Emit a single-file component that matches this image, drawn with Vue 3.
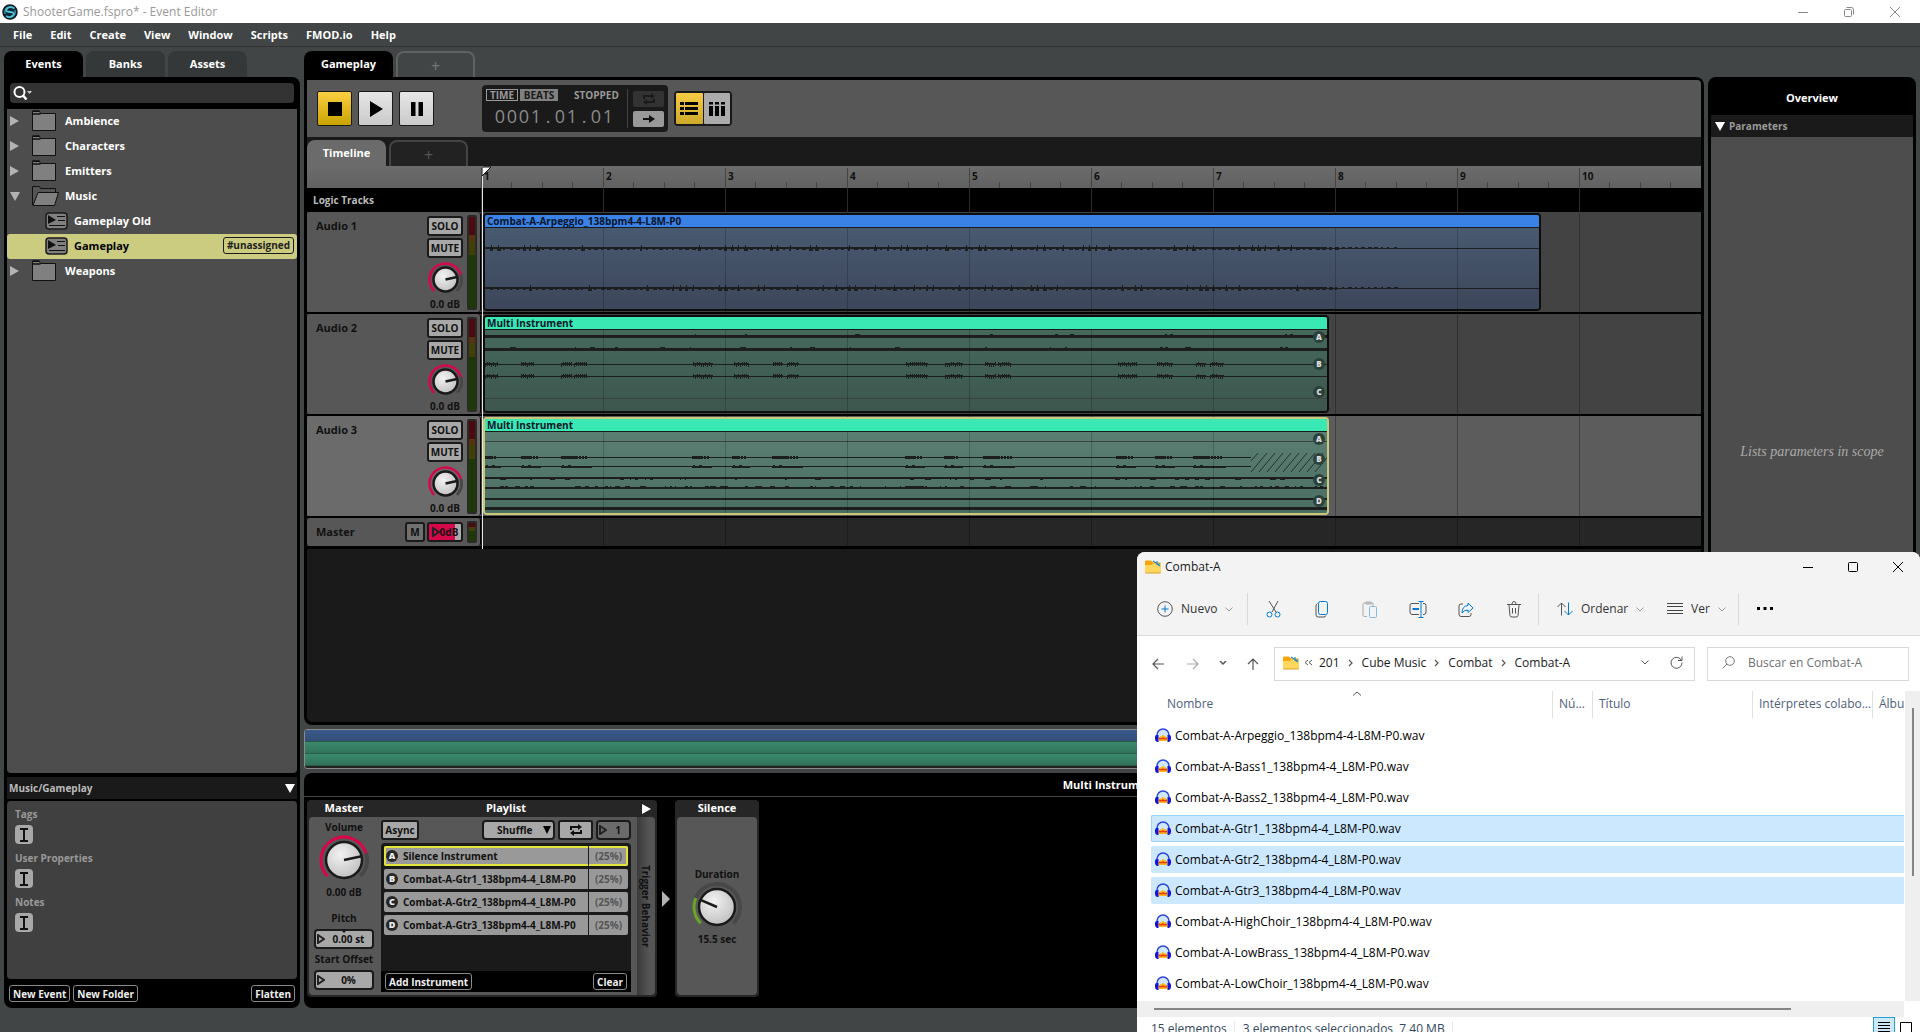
<script setup>
import { h } from 'vue'

const menus = ['File', 'Edit', 'Create', 'View', 'Window', 'Scripts', 'FMOD.io', 'Help']
const tree = [
  { name: 'Ambience', kind: 'folder' },
  { name: 'Characters', kind: 'folder' },
  { name: 'Emitters', kind: 'folder' },
  { name: 'Music', kind: 'open' },
  { name: 'Gameplay Old', kind: 'event' },
  { name: 'Gameplay', kind: 'event', selected: true, tag: '#unassigned' },
  { name: 'Weapons', kind: 'folder' },
]
const properties = ['Tags', 'User Properties', 'Notes']
const bars = [1, 2, 3, 4, 5, 6, 7, 8, 9, 10]
const position = '0001.01.01'.split('')
const playlist = [
  { id: 'A', name: 'Silence Instrument', selected: true },
  { id: 'B', name: 'Combat-A-Gtr1_138bpm4-4_L8M-P0' },
  { id: 'C', name: 'Combat-A-Gtr2_138bpm4-4_L8M-P0' },
  { id: 'D', name: 'Combat-A-Gtr3_138bpm4-4_L8M-P0' },
]
const files = [
  'Combat-A-Arpeggio_138bpm4-4-L8M-P0.wav',
  'Combat-A-Bass1_138bpm4-4_L8M-P0.wav',
  'Combat-A-Bass2_138bpm4-4_L8M-P0.wav',
  'Combat-A-Gtr1_138bpm4-4_L8M-P0.wav',
  'Combat-A-Gtr2_138bpm4-4_L8M-P0.wav',
  'Combat-A-Gtr3_138bpm4-4_L8M-P0.wav',
  'Combat-A-HighChoir_138bpm4-4_L8M-P0.wav',
  'Combat-A-LowBrass_138bpm4-4_L8M-P0.wav',
  'Combat-A-LowChoir_138bpm4-4_L8M-P0.wav',
]
const crumbs = ['201', 'Cube Music', 'Combat', 'Combat-A']

/* Waveforms are built from small rectangles with a repeatable noise source. */
function noise(n) {
  const v = Math.sin(n * 12.9898 + 4.1) * 43758.5453
  return v - Math.floor(v)
}
const rect = (x, y, w, t) => `M${x} ${y}h${w}v${t}h${-w}z`

function pulses(y, seed) {
  let d = rect(0, y, 1060, 1) + rect(0, y - 1, 842, 2)
  let i = 0
  for (let x = 5; x < 915; x += 6 + (i % 2)) {
    i++
    const late = x > 850
    const up = late ? 1 : 1 + Math.floor(noise(i + seed) * 3)
    const w = 2 + Math.floor(noise(i * 3 + seed) * 3)
    d += rect(x, y - 1, w, late ? 2 : 3 + (up > 2 ? 1 : 0))
    if (!late && up > 2) d += rect(x + 1, y - 3, 1, 6)
  }
  return d
}
function band(y, t, seed, density, side) {
  let d = rect(0, y, 846, t)
  for (let x = 0; x < 840; x += 5) {
    if (noise(x + seed) < density) d += rect(x, side < 0 ? y - 1 : y + t, 1 + Math.floor(noise(x + seed * 2) * 6), 1)
  }
  return d
}
const burstsTwo = [[0, 13], [36, 49], [76, 87], [89, 102], [208, 228], [249, 264], [288, 298], [302, 314], [421, 443], [460, 478], [500, 511], [513, 526], [633, 652], [672, 688], [711, 721], [725, 739]]
const burstsThree = [[0, 12], [36, 52], [76, 103], [207, 223], [247, 261], [287, 314], [420, 436], [459, 474], [498, 526], [631, 647], [670, 686], [708, 737]]
function combs(y) {
  let d = rect(0, y, 846, 1)
  for (const [a, b] of burstsTwo) {
    d += rect(a, y - 1, b - a, 2)
    for (let x = a; x < b; x += 2) d += rect(x, y - (noise(x) > 0.4 ? 2 : 1), 1, 4)
  }
  return d
}
function blocks(y, tall) {
  let d = rect(0, y, 766, 1)
  for (const [a, b] of burstsThree) {
    if (tall) {
      d += rect(a, y - 1, Math.round((b - a) * 0.6), 3)
      for (let x = a; x < b; x += 3) d += rect(x, y - 1, 2, 3)
    } else {
      d += rect(a, y, b - a + 4, 2)
      d += rect(a + 1, y - 1, 2, 1) + rect(a + 7, y - 1, 3, 1)
    }
  }
  return d
}
let hatch = 'M766 29l7 -8'
for (let i = 0; i < 9; i++) hatch += `M${766 + i * 8} 40l16 -19`

const tracks = [
  { name: 'Audio 1', clip: 'Combat-A-Arpeggio_138bpm4-4-L8M-P0', tone: 'blue', width: 1058, wave: pulses(20, 1) + pulses(60, 9), faint: [], voices: [] },
  {
    name: 'Audio 2', clip: 'Multi Instrument', tone: 'green', width: 846,
    wave: band(5, 3, 3, 0.06, -1) + band(18, 3, 8, 0.15, -1) + combs(34) + combs(46),
    faint: [68], voices: [['A', 1], ['B', 28], ['C', 56]],
  },
  {
    name: 'Audio 3', clip: 'Multi Instrument', tone: 'green', width: 846, selected: true, hatch: true,
    wave: blocks(25, true) + blocks(34, false) + band(45, 2, 5, 0.15, 1) + band(55, 2, 2, 0.5, -1) + rect(0, 66, 846, 2) + rect(0, 75, 846, 3),
    faint: [9], voices: [['A', 1], ['B', 21], ['C', 42], ['D', 63]],
  },
]

/* Rotary control: arc from 135° clockwise to 405°. */
function Knob({ size, value, color, track = '#484848' }) {
  const big = size > 40
  const c = size / 2
  const r = big ? 23 : 16
  const pt = (deg, rad) => {
    const a = (deg * Math.PI) / 180
    return `${(c + rad * Math.cos(a)).toFixed(2)} ${(c + rad * Math.sin(a)).toFixed(2)}`
  }
  const arc = (a, b, stroke, w) => h('path', { d: `M${pt(a, r)}A${r} ${r} 0 ${b - a > 180 ? 1 : 0} 1 ${pt(b, r)}`, stroke, 'stroke-width': w, fill: 'none' })
  return h('svg', { width: size, height: size, 'aria-hidden': 'true' }, [
    h('defs', [h('radialGradient', { id: 'cap', cx: '40%', cy: '35%', r: '70%' }, [h('stop', { offset: '0', 'stop-color': '#f2f2f2' }), h('stop', { offset: '1', 'stop-color': '#bfbfbf' })])]),
    arc(value, 405, track, big ? 4 : 3),
    arc(135, value, color, big ? 3 : 2.5),
    h('circle', { cx: c, cy: c, r: big ? 18 : 12, fill: 'url(#cap)', stroke: '#1a1a1a', 'stroke-width': 2.5 }),
    h('path', { d: `M${c} ${c}L${pt(value > 300 ? 348 : value, big ? 18 : 13)}`, stroke: '#1a1a1a', 'stroke-width': 2.5 }),
  ])
}
Knob.props = ['size', 'value', 'color', 'track']

const Chevron = () => h('svg', { width: 8, height: 5, fill: 'none', stroke: 'currentColor', 'aria-hidden': 'true' }, [h('path', { d: 'M.5 .5L4 4 7.500 .5' })])
const Loop = () => h('svg', { width: 14, height: 12, viewBox: '0 0 14 12', fill: 'none', stroke: 'currentColor', 'stroke-width': 2, 'aria-hidden': 'true' }, [
  h('path', { d: 'M2 6V3h8M12 6v3H4' }),
  h('path', { d: 'M9 0l4 3-4 3zM5 6L1 9l4 3z', fill: 'currentColor', stroke: 'none' }),
])
const FolderIcon = () => h('svg', { width: 16, height: 14, viewBox: '0 0 16 14', 'aria-hidden': 'true' }, [
  h('path', { d: 'M0 1.500Q0 .5 1 .5h5l2 2h7q1 0 1 1V8H0z', fill: '#f5a50a' }),
  h('path', { d: 'M0 5h7l1.500-1.500H16v8.500q0 1-1 1H1q-1 0-1-1z', fill: '#ffd75e' }),
  h('path', { d: 'M0 12q0 1.500 1 1.500h14q1 0 1-1.500v.5H0z', fill: '#e0a020' }),
  h('path', { d: 'M8 1l3 2M15 6l-3-2M12 1v3M11 4h4', stroke: '#1e88c7', 'stroke-width': 1.2, fill: 'none' }),
])
const Audacity = () => h('svg', { width: 16, height: 15, viewBox: '0 0 16 15', 'aria-hidden': 'true' }, [
  h('circle', { cx: 8, cy: 7.5, r: 5.5, fill: '#cfe8fb' }),
  h('path', { d: 'M3.500 13V10l2-2 1 .5L8 6.500l1.500 2 1-.5 2 2v3z', fill: '#ffb31a' }),
  h('path', { d: 'M4 9.500l2 .8 2-1 2 1 2-.8v1.500l-2 .6-2-.6-2 .6-2-.6z', fill: '#f0330a' }),
  h('path', { d: 'M2 9V7a6 6 0 0112 0v2', stroke: '#2a44e0', 'stroke-width': 1.5, fill: 'none' }),
  h('path', { d: 'M0 9q0-2 2-2h1.500v7H2Q0 13 0 11zM16 9q0-2-2-2h-1.500v7H14q2-1 2-3z', fill: '#1414d8' }),
])
</script>

<template>
  <div class="desktop">
    <header class="titlebar">
      <svg width="16" height="16" viewBox="0 0 16 16" aria-hidden="true">
        <circle cx="8" cy="8" r="7" fill="#0f2a33" stroke="#12181b" stroke-width="1.500" />
        <path d="M12.500 4.500Q8 1.500 5 4.500T8 8t3 3.500-7 .5" fill="none" stroke="#4fc3dc" stroke-width="1.800" />
        <path d="M3 10q-1-5 3-7M13 6q1 5-3 7" fill="none" stroke="#4fc3dc" />
      </svg>
      <h1>ShooterGame.fspro* - Event Editor</h1>
      <div class="caption">
        <button aria-label="Minimize"><svg width="10" height="10"><path d="M0 5.500h10" stroke="currentColor" /></svg></button>
        <button aria-label="Restore"><svg width="10" height="10" fill="none" stroke="currentColor"><rect x=".5" y="2.500" width="7" height="7" rx="1" /><path d="M2.500.5h5q2 0 2 2v5" /></svg></button>
        <button aria-label="Close"><svg width="10" height="10"><path d="M0 0l10 10M10 0L0 10" stroke="currentColor" /></svg></button>
      </div>
    </header>
    <nav class="menubar"><button v-for="m in menus" :key="m">{{ m }}</button></nav>

    <main class="workspace">
      <aside class="browser">
        <div class="tabs">
          <button class="tab on">Events</button><button class="tab">Banks</button><button class="tab">Assets</button>
        </div>
        <div class="browser-panel">
          <label class="search">
            <svg width="20" height="15" viewBox="0 0 20 15" aria-hidden="true"><circle cx="6.500" cy="6" r="5" fill="none" stroke="#fff" stroke-width="2" /><path d="M10 9.500l3.500 4" stroke="#fff" stroke-width="2.500" /><path d="M14 5h5l-2.500 3z" fill="#ccc" /></svg>
            <input type="text" aria-label="Search events" />
          </label>
          <ul class="tree">
            <li v-for="t in tree" :key="t.name" :class="[t.kind, { selected: t.selected }]">
              <svg v-if="t.kind !== 'event'" class="arrow" width="10" height="10" aria-hidden="true"><path :d="t.kind === 'open' ? 'M0 1h10L5 10z' : 'M0 0l9 5-9 5z'" fill="#b3b3b3" /></svg>
              <svg v-if="t.kind === 'folder'" class="glyph" width="28" height="22" aria-hidden="true"><path d="M.5 20.500v-19h7l1 2h15v17z" fill="#808080" stroke="#111" /><path d="M.5 4h8M.5 1h7" stroke="#111" stroke-width="1.500" /></svg>
              <svg v-else-if="t.kind === 'open'" class="glyph" width="28" height="22" aria-hidden="true"><path d="M.5 20V1.500h7l1 2h15V7" fill="#555" stroke="#111" /><path d="M1 20.500L6 7.500h20.500l-4 13z" fill="#808080" stroke="#111" /></svg>
              <svg v-else class="glyph" width="23" height="18" aria-hidden="true"><rect x="1" y="1" width="21" height="16" rx="3" fill="#808080" stroke="#1a1a1a" stroke-width="1.500" /><path d="M3 3l8 5-8 4z" fill="#111" /><path d="M12 4.500h8M13 8.500h7M4 13.500h16" stroke="#111" /></svg>
              <span>{{ t.name }}</span>
              <em v-if="t.tag">{{ t.tag }}</em>
            </li>
          </ul>
          <div class="section-bar"><span>Music/Gameplay</span><svg width="10" height="9" aria-hidden="true"><path d="M0 0h10L5 9z" fill="#fff" /></svg></div>
          <div class="properties">
            <template v-for="p in properties" :key="p">
              <h3>{{ p }}</h3>
              <button :aria-label="'Edit ' + p"><svg width="8" height="14" fill="none" stroke="#111" stroke-width="2"><path d="M0 1h8M0 13h8M4 1v12" /></svg></button>
            </template>
          </div>
          <div class="browser-foot"><button class="outline">New Event</button><button class="outline">New Folder</button><button class="outline last">Flatten</button></div>
        </div>
      </aside>

      <section class="right">
        <div class="upper">
          <div class="editor">
            <div class="tabs"><button class="tab on wide">Gameplay</button><button class="tab add" aria-label="New tab">+</button></div>
            <div class="editor-panel">
              <div class="transport">
                <button class="key gold" aria-label="Stop"><svg width="14" height="14"><path d="M0 0h14v14H0z" /></svg></button>
                <button class="key" aria-label="Play"><svg width="14" height="16"><path d="M1 0l13 8-13 8z" /></svg></button>
                <button class="key" aria-label="Pause"><svg width="12" height="14"><path d="M0 0h4.500v14H0zM7.500 0H12v14H7.500z" /></svg></button>
                <div class="counter">
                  <div class="readout">
                    <div class="modes"><button>TIME</button><button class="lit">BEATS</button><span>STOPPED</span></div>
                    <div class="digits"><i v-for="(c, i) in position" :key="i">{{ c }}</i></div>
                  </div>
                  <div class="loops"><button aria-label="Loop"><Loop /></button><button class="lit" aria-label="Follow"><svg width="12" height="8"><path d="M0 4h8" stroke="#111" stroke-width="2" /><path d="M6 0l6 4-6 4z" fill="#111" /></svg></button></div>
                </div>
                <div class="views">
                  <button class="gold" aria-label="Track view"><svg width="18" height="14"><path d="M0 0h4v3H0zM5 0h13v3H5zM0 5h4v3H0zM5 5h13v3H5zM0 10h4v3H0zM5 10h13v3H5z" /></svg></button>
                  <button aria-label="Mixer view"><svg width="16" height="14"><path d="M0 0h4v2.500H0zM0 4h4v10H0zM6 0h4v2.500H6zM6 4h4v10H6zM12 0h4v2.500h-4zM12 4h4v10h-4z" /></svg></button>
                </div>
              </div>
              <div class="sheets"><button class="tab on">Timeline</button><button class="tab add" aria-label="New parameter sheet">+</button></div>
              <div class="timeline">
                <div class="ruler"><div class="bars"><span v-for="b in bars" :key="b">{{ b }}</span></div></div>
                <div class="logic"><h2>Logic Tracks</h2><div class="grid"></div></div>
                <div v-for="t in tracks" :key="t.name" class="track" :class="{ selected: t.selected }">
                  <div class="head">
                    <h2>{{ t.name }}</h2>
                    <div class="controls"><button>SOLO</button><button>MUTE</button><Knob :size="35" :value="343" color="#d6084a" /><small>0.0 dB</small></div>
                    <div class="meter"></div>
                  </div>
                  <div class="lane grid">
                    <div class="clip" :class="t.tone" :style="{ width: t.width + 'px' }">
                      <div class="clip-title">{{ t.clip }}</div>
                      <div class="wave">
                        <svg :width="t.width - 4" height="81" aria-hidden="true">
                          <path v-for="f in t.faint" :key="f" :d="`M0 ${f + 0.5}h846`" stroke="#3d4342" />
                          <path :d="t.wave" fill="#1c1f1e" shape-rendering="crispEdges" />
                          <path v-if="t.hatch" :d="hatch" stroke="#27302d" fill="none" />
                        </svg>
                        <b v-for="v in t.voices" :key="v[0]" :style="{ top: v[1] + 'px' }">{{ v[0] }}</b>
                      </div>
                    </div>
                  </div>
                </div>
                <div class="track master">
                  <div class="head">
                    <h2>Master</h2>
                    <button class="mute">M</button>
                    <button class="fader"><svg width="8" height="10" fill="none" stroke="#222" stroke-width="2"><path d="M1 1l6 4-6 4z" /></svg>0dB</button>
                    <div class="meter"></div>
                  </div>
                  <div class="lane grid"></div>
                </div>
                <div class="playhead"><svg width="10" height="10"><path d="M0 1h9L0 10z" fill="#fff" stroke="#111" /></svg></div>
              </div>
            </div>
            <div class="strip"><i></i><i></i><i></i></div>
          </div>
          <aside class="overview">
            <h2>Overview</h2>
            <h3><svg width="10" height="9" aria-hidden="true"><path d="M0 0h10L5 9z" fill="#fff" /></svg>Parameters</h3>
            <p>Lists parameters in scope</p>
          </aside>
        </div>

        <div class="deck">
          <h2>Multi Instrument</h2>
          <div class="modules">
            <section class="module">
              <div class="master-col">
                <h3>Master</h3>
                <div class="plate">
                  <label>Volume</label><Knob :size="50" :value="343" color="#d6084a" /><span class="amount">0.00 dB</span>
                  <label for="pitch">Pitch</label>
                  <div class="field notch"><svg width="8" height="10" fill="none" stroke="#222" stroke-width="2"><path d="M1 1l6 4-6 4z" /></svg><input id="pitch" value="0.00 st" /></div>
                  <label for="offset">Start Offset</label>
                  <div class="field"><svg width="8" height="10" fill="none" stroke="#222" stroke-width="2"><path d="M1 1l6 4-6 4z" /></svg><input id="offset" value="0%" /></div>
                </div>
              </div>
              <div class="list-col">
                <h3>Playlist</h3>
                <div class="plate">
                  <div class="tools">
                    <button>Async</button>
                    <div class="select"><select aria-label="Play mode"><option>Shuffle</option></select><svg width="8" height="8" aria-hidden="true"><path d="M0 0h8L4 8z" /></svg></div>
                    <button class="loop" aria-label="Loop"><Loop /></button>
                    <div class="count"><svg width="8" height="10" fill="none" stroke="#222" stroke-width="2"><path d="M1 1l6 4-6 4z" /></svg><input value="1" aria-label="Play count" /></div>
                  </div>
                  <ul>
                    <li v-for="p in playlist" :key="p.id" :class="{ selected: p.selected }"><b>{{ p.id }}</b><span>{{ p.name }}</span><small>(25%)</small></li>
                  </ul>
                  <div class="list-foot"><button class="outline">Add Instrument</button><button class="outline">Clear</button></div>
                </div>
              </div>
              <div class="trigger">
                <h3><svg width="9" height="10" aria-label="Expand"><path d="M0 0l9 5-9 5z" fill="#fff" /></svg></h3>
                <div class="plate"><span>Trigger Behavior</span></div>
              </div>
            </section>
            <svg class="chain" width="8" height="16" aria-hidden="true"><path d="M0 0l8 8-8 8z" fill="#b3b3b3" /></svg>
            <section class="module silence">
              <div class="silence-col">
                <h3>Silence</h3>
                <div class="plate"><label>Duration</label><Knob :size="50" :value="203" color="#6ba527" /><span class="amount">15.5 sec</span></div>
              </div>
            </section>
          </div>
        </div>
      </section>
    </main>

    <section class="explorer">
      <div class="ex-top">
        <div class="ex-title"><FolderIcon /><h2>Combat-A</h2>
          <div class="caption">
            <button aria-label="Minimizar"><svg width="10" height="10"><path d="M0 5.500h10" stroke="currentColor" /></svg></button>
            <button aria-label="Maximizar"><svg width="10" height="10"><rect x=".5" y=".5" width="9" height="9" rx="1" fill="none" stroke="currentColor" /></svg></button>
            <button aria-label="Cerrar"><svg width="10" height="10"><path d="M0 0l10 10M10 0L0 10" stroke="currentColor" /></svg></button>
          </div>
        </div>
        <div class="ex-tools">
          <button class="new"><svg width="16" height="16" fill="none"><circle cx="8" cy="8" r="7.300" stroke="#555" /><path d="M8 4.500v7M4.500 8h7" stroke="#0078d4" /></svg>Nuevo<Chevron /></button>
          <hr />
          <button class="ico" aria-label="Cortar"><svg width="16" height="17" fill="none"><path d="M3 0l7 11M12 0L6 11" stroke="#555" /><circle cx="3.500" cy="13.500" r="2.500" stroke="#0078d4" /><circle cx="11.500" cy="13.500" r="2.500" stroke="#0078d4" /></svg></button>
          <button class="ico" aria-label="Copiar"><svg width="14" height="17" fill="none"><path d="M2.500 2.500Q1 3 1 5v9q0 2 2 2h6q1.500 0 2-1.500" stroke="#555" /><rect x="3.500" y=".5" width="9" height="13" rx="2" stroke="#0078d4" /></svg></button>
          <button class="ico dim" aria-label="Pegar"><svg width="16" height="17" fill="none"><path d="M5 15.500H2.500q-1.500 0-1.500-1.500V3q0-1 1.500-1H11v3" stroke="#555" /><path d="M4 1h5v2H4z" stroke="#555" /><rect x="7.500" y="5.500" width="7" height="11" rx="1" stroke="#0078d4" /></svg></button>
          <button class="ico" aria-label="Cambiar nombre"><svg width="18" height="17" fill="none"><path d="M10 2.500H3Q1 2.500 1 4v7q0 2.500 2 2.500h7M14 2.500h1q2 0 2 2V11q0 2.500-2 2.500h-1" stroke="#555" /><path d="M12 .5v16M9.500.5h5M9.500 16.500h5" stroke="#0078d4" /><path d="M3.500 8H10" stroke="#0078d4" stroke-width="2" /></svg></button>
          <button class="ico" aria-label="Compartir"><svg width="16" height="17" fill="none"><path d="M5 3H3Q1 3 1 5v8q0 2.500 2 2.500h8q2 0 2-2V12" stroke="#555" /><path d="M10 2l5 5-5 4.500V9q-4 0-6 3 0-7 6-7.500z" stroke="#0078d4" /></svg></button>
          <button class="ico" aria-label="Eliminar"><svg width="14" height="17" fill="none" stroke="#555"><path d="M0 3.500h14M5 3q0-2.500 2-2.500T9 3M2 4l1 10.500q0 1.500 2 1.500h4q2 0 2-1.500L12 4M5.500 7v5.500M8.500 7v5.500" /></svg></button>
          <hr />
          <button class="sort"><svg width="16" height="14" fill="none"><path d="M4.500 13.500V1M.5 5l4-4 4 4" stroke="#555" /><path d="M11.500.5V13M7.500 9l4 4 4-4" stroke="#0078d4" /></svg>Ordenar<Chevron /></button>
          <button class="see"><svg width="16" height="12"><path d="M0 .5h16M0 3.500h16M0 7.500h16M0 10.500h16" stroke="#444" /></svg>Ver<Chevron /></button>
          <hr />
          <button class="ico" aria-label="Más opciones"><svg width="16" height="4"><path d="M0 0h3v3H0zM6.500 0h3v3h-3zM13 0h3v3h-3z" /></svg></button>
        </div>
      </div>
      <div class="ex-nav">
        <button aria-label="Atrás"><svg width="12" height="12" fill="none" stroke="#555" stroke-width="1.200"><path d="M12 6H1M6 1L1 6l5 5" /></svg></button>
        <button aria-label="Adelante"><svg width="12" height="12" fill="none" stroke="#aaa" stroke-width="1.200"><path d="M0 6h11M6 1l5 5-5 5" /></svg></button>
        <button class="thin" aria-label="Recientes"><svg width="8" height="5" fill="none" stroke="#555" stroke-width="1.500"><path d="M1 0l3 3 3-3" /></svg></button>
        <button class="up" aria-label="Arriba"><svg width="12" height="12" fill="none" stroke="#555" stroke-width="1.200"><path d="M6 12V1M1 6l5-5 5 5" /></svg></button>
        <div class="path">
          <FolderIcon /><svg class="back" width="9" height="7" fill="none" stroke="#555"><path d="M4 1L1 3.500 4 6M8 1L5 3.500 8 6" /></svg>
          <template v-for="(c, i) in crumbs" :key="c"><svg v-if="i" class="sep" width="6" height="8" fill="none" stroke="#555" stroke-width="1.200"><path d="M1 1l3 3-3 3" /></svg><a href="#">{{ c }}</a></template>
          <button class="drop" aria-label="Historial"><Chevron /></button>
          <button aria-label="Actualizar"><svg width="13" height="13" fill="none" stroke="#555"><path d="M11.500 4.500a5.500 5.500 0 10.500 2M12 .5v4H8" /></svg></button>
        </div>
        <label class="find"><svg width="13" height="13" fill="none" stroke="#777"><circle cx="8" cy="5" r="4.300" /><path d="M5 8L.5 12.500" /></svg><input type="text" placeholder="Buscar en Combat-A" aria-label="Buscar" /></label>
      </div>
      <div class="ex-body">
        <div class="ex-files">
          <table>
            <thead><tr><th>Nombre<svg class="asc" width="8" height="5" fill="none" stroke="#555"><path d="M0 4.500L4 1l4 3.500" /></svg></th><th class="w40">Nú...</th><th class="w160">Título</th><th class="w120">Intérpretes colabo...</th><th class="w32">Álbu</th></tr></thead>
            <tbody>
              <tr v-for="(f, i) in files" :key="f" :class="{ sel: i > 2 && i < 6, focus: i === 3 }"><td><div><Audacity />{{ f }}</div></td><td></td><td></td><td></td><td></td></tr>
            </tbody>
          </table>
        </div>
        <div class="vscroll"><i></i></div>
      </div>
      <div class="hscroll"><i></i></div>
      <footer class="status">
        <span>15 elementos</span><span>3 elementos seleccionados&nbsp; 7,40 MB</span>
        <button class="lit" aria-label="Detalles"><svg width="12" height="12"><path d="M0 .5h12M0 3.500h12M0 6.500h12M0 9.500h12" stroke="#000" /></svg></button>
        <button aria-label="Iconos"><svg width="12" height="12"><path d="M.5.5h11v10H.5z" fill="none" stroke="#000" /></svg></button>
      </footer>
    </section>
  </div>
</template>

<style>
body { margin: 0; background: #414545; }
</style>

<style scoped>
* { box-sizing: border-box; }
h1, h2, h3, p, ul { margin: 0; padding: 0; font: inherit; list-style: none; }
button, input, select { font: inherit; color: inherit; margin: 0; padding: 0; border: 0; background: none; }
button { display: flex; align-items: center; justify-content: center; white-space: nowrap; }
svg { display: block; flex: none; }
.desktop { position: relative; display: flex; flex-direction: column; min-height: 100vh; overflow: hidden; background: #414545; color: #fff; font: 700 11px/16px "Open Sans", "Noto Sans", sans-serif; }

.titlebar { display: flex; align-items: center; gap: 5px; height: 23px; padding-left: 2px; background: #fff; color: #999; font-size: 12px; font-weight: 400; }
.caption { display: flex; margin-left: auto; }
.caption button { width: 46px; height: 20px; }
.titlebar .caption { color: #888; margin-right: 2px; }
.menubar { display: flex; gap: 18px; height: 24px; padding-left: 13px; border-bottom: 1px solid #303434; }

.workspace { flex: 1; display: flex; gap: 4px; padding: 4px 4px 24px; }
.tabs { display: flex; gap: 3px; height: 26px; }
.tab { width: 79px; height: 26px; border-radius: 8px 8px 0 0; background: #343838; }
.tab.on { background: #000; }
.tab.wide { width: 89px; }
.tab.add { padding-top: 2px; border: 2px solid #606262; border-bottom: 0; background: none; color: #777; font-size: 16px; font-weight: 400; }

.browser { display: flex; flex-direction: column; width: 296px; flex: none; }
.browser-panel { flex: 1; display: flex; flex-direction: column; padding: 6px 3px; background: #000; border-radius: 0 8px 8px 8px; }
.search { display: flex; align-items: center; height: 20px; margin: 0 3px 6px; padding-left: 3px; border-radius: 4px; background: #333; }
.search input { flex: 1; outline: 0; }
.tree { flex: 1; background: #4d4d4d; border-radius: 0 0 4px 4px; }
.tree li { display: flex; align-items: center; height: 25px; padding: 0 3px 2px; }
.tree .glyph { margin-left: 12px; margin-right: 5px; }
.tree li.event .glyph { margin-left: 35px; margin-right: 6px; }
.tree li.selected { background: #cccc80; border-radius: 3px; color: #000; }
.tree em { margin-left: auto; padding: 0 3px; border: 1px solid #1a1a1a; border-radius: 3px; font-style: normal; font-size: 10px; line-height: 15px; color: #222; }
.section-bar { display: flex; align-items: center; justify-content: space-between; height: 22px; margin: 4px 0 2px; padding: 0 2px; background: #1a1a1a; color: #bbb; font-size: 10px; }
.properties { height: 178px; padding: 5px 8px; border-radius: 4px; background: #404040; }
.properties h3 { color: #999; font-size: 10px; }
.properties button { width: 18px; height: 19px; margin: 3px 0 6px; border-radius: 4px; background: #a8a8a8; }
.browser-foot { display: flex; gap: 3px; padding: 6px 2px 0; }
.outline { height: 17px; padding: 0 3px; border: 1px solid #8a8a8a; border-radius: 3px; background: #000; color: #eee; font-size: 10px; }
.outline.last { margin-left: auto; }

.right { flex: 1; min-width: 0; display: flex; flex-direction: column; gap: 4px; }
.upper { flex: 1; display: flex; gap: 4px; }
.editor { flex: 1; min-width: 0; display: flex; flex-direction: column; }
.editor-panel { flex: 1; display: flex; flex-direction: column; padding: 3px; background: #000; border-radius: 0 8px 8px 8px; }
.transport { display: flex; align-items: center; height: 57px; padding-left: 10px; gap: 6px; background: #575757; color: #000; border-radius: 0 4px 0 0; }
.key { width: 35px; height: 35px; border: 1px solid #1a1a1a; border-radius: 2px; background: linear-gradient(#e6e6e6, #cacaca); }
.key.gold { background: linear-gradient(#fbce42, #c9a400); }
.counter { display: flex; width: 186px; height: 47px; margin-left: 42px; padding: 4px; border-radius: 4px; background: #1a1a1a; color: #999; }
.readout { flex: 1; }
.modes { display: flex; gap: 2px; font-size: 10px; line-height: 10px; }
.modes button { width: 32px; height: 12px; border: 1px solid #999; }
.modes .lit { width: 38px; background: #808080; border-color: #808080; color: #1a1a1a; }
.modes span { margin-left: 14px; line-height: 12px; }
.digits { display: flex; margin: 4px 0 0 8px; font-size: 18px; font-weight: 400; line-height: 22px; color: #8a8a8a; }
.digits i { width: 12px; text-align: center; font-style: normal; }
.loops { display: flex; flex-direction: column; justify-content: center; gap: 4px; padding-left: 5px; border-left: 1px solid #444; color: #1a1a1a; }
.loops button { width: 31px; height: 16px; border-radius: 2px; background: #333; }
.loops .lit { background: #999; }
.views { display: flex; width: 58px; height: 35px; border: 2px solid #1a1a1a; border-radius: 4px; background: #1a1a1a; gap: 1px; }
.views button { flex: 1; background: #ababab; border-radius: 1px; }
.views button.gold { background: linear-gradient(#f7cc45, #cda92a); }
.sheets { display: flex; gap: 3px; height: 29px; padding-top: 3px; background: #1a1a1a; }
.sheets .on { background: #6b6b6b; }
.sheets .add { border-color: #444; background: #222; color: #555; }

.timeline { position: relative; flex: 1; background: #1a1a1a; border-radius: 0 0 5px 5px; color: #111; }
.ruler { height: 22px; padding-left: 174px; background: linear-gradient(#6c6c6c, #616161); overflow: hidden; }
.bars { display: flex; height: 22px; }
.bars span { flex: none; width: 122px; height: 20px; margin-top: 2px; padding-left: 2px; border-left: 1px solid #444; font-size: 10px; line-height: 16px; background: linear-gradient(#444, #444) 29px 14px / 1px 6px no-repeat, linear-gradient(#444, #444) 60px 14px / 1px 6px no-repeat, linear-gradient(#444, #444) 90px 14px / 1px 6px no-repeat; }
.grid { position: relative; flex: 1; min-width: 0; background: linear-gradient(90deg, rgba(0, 0, 0, .3) 1px, transparent 1px) 0 0 / 122px 100%; }
.logic { display: flex; height: 24px; background: #000; }
.logic h2 { width: 174px; padding-left: 6px; color: #bbb; font-size: 10px; line-height: 24px; }
.logic .grid { background-image: linear-gradient(90deg, #2a2a2a 1px, transparent 1px); }
.track { display: flex; height: 102px; border-bottom: 2px solid #000; background: #434343; }
.track.selected { background: #5c5c5c; }
.head { display: flex; width: 174px; flex: none; padding: 3px 3px 2px 9px; border-right: 1px solid #000; border-radius: 3px; background: #575757; }
.selected .head { background: #6b6b6b; }
.head h2 { flex: 1; line-height: 22px; }
.controls { display: flex; flex-direction: column; align-items: center; width: 36px; margin: 1px 4px 0 0; font-size: 10px; }
.controls button, .mute, .fader { width: 36px; height: 20px; margin-bottom: 2px; border: 2px solid #1a1a1a; border-radius: 3px; background: #a8a8a8; font-size: 10px; }
.controls small { font-size: 10px; line-height: 12px; }
.controls svg { margin: 2px 0 1px; }
.meter { width: 10px; height: 95px; border: 2px solid #2a2a2a; border-radius: 2px; background: linear-gradient(#4a0a10 0 20%, #57330f 20% 26%, #404007 26% 42%, #1d3a06 42%); }
.lane { padding: 1px 0 0 2px; }
.clip { height: 98px; border: 2px solid #0d0d0d; border-radius: 4px; overflow: hidden; display: flex; flex-direction: column; }
.clip-title { height: 13px; padding-left: 2px; border-bottom: 1px solid #1a1a1a; font-size: 10px; line-height: 12px; color: #08142a; white-space: nowrap; }
.wave { position: relative; flex: 1; }
.wave::after { content: ""; position: absolute; inset: 0; background: linear-gradient(90deg, rgba(0, 0, 0, .2) 1px, transparent 1px) 118px 0 / 122px 100%; }
.wave b { position: absolute; right: 2px; width: 12px; height: 12px; border-radius: 6px; background: #2a423b; color: #ddd; font-size: 8px; line-height: 12px; text-align: center; }
.blue .clip-title { background: #3b82e6; }
.blue .wave { background: linear-gradient(#485a70, #3d465a); }
.green .clip-title { background: #3ae8b3; }
.green .wave { background: linear-gradient(#46695c, #3d564e); }
.selected .clip { border-color: #c8c878; }
.selected .wave { background: linear-gradient(#5a7f72, #4b6e62); }
.track.master { height: 31px; border-bottom-width: 3px; background: #262626; }
.mute, .fader { margin: 1px 2px 0 0; }
.mute { width: 20px; background: #707070; }
.fader { margin-right: 4px; background: linear-gradient(90deg, #d6084a 26px, #ababab 26px); }
.master .meter { height: 22px; }
.playhead { position: absolute; left: 175px; top: 0; width: 1px; height: 383px; background: #e6e6e6; }

.strip { display: flex; flex-direction: column; height: 40px; margin-top: 4px; border: 1px solid #8a8a8a; border-radius: 3px; background: #222; overflow: hidden; }
.strip i { height: 12px; background: linear-gradient(#3a8a6c, #30735a); border-bottom: 1px solid #2a5a4a; }
.strip i:first-child { background: linear-gradient(#3a5a8c, #334e78); }

.overview { display: flex; flex-direction: column; width: 208px; flex: none; margin-top: 26px; padding: 0 3px 3px; border-radius: 8px; background: #000; }
.overview h2 { line-height: 42px; height: 38px; text-align: center; }
.overview h3 { display: flex; align-items: center; gap: 4px; height: 22px; padding-left: 4px; background: #1a1a1a; color: #999; font-size: 10px; }
.overview p { flex: 1; display: flex; align-items: center; justify-content: center; background: #4d4d4d; color: #aaa; font: italic 400 14px/16px "Liberation Serif", serif; }

.deck { height: 235px; border-radius: 8px; background: #000; }
.deck > h2 { height: 24px; line-height: 24px; text-align: center; border-bottom: 1px solid #444; }
.modules { display: flex; padding: 3px; }
.module { display: flex; height: 197px; padding: 0 2px 2px; border-radius: 4px; background: #262626; }
.module > div { display: flex; flex-direction: column; }
.module h3 { height: 17px; line-height: 15px; text-align: center; }
.plate { flex: 1; display: flex; flex-direction: column; background: #575757; color: #111; font-size: 10px; }
.master-col { width: 70px; }
.master-col .plate { align-items: center; padding-top: 2px; border-radius: 4px 0 0 4px; }
.master-col label { line-height: 16px; }
.amount { margin-bottom: 11px; line-height: 14px; }
.field, .count, .select { position: relative; display: flex; align-items: center; width: 60px; height: 20px; margin: 3px 0 2px; padding-left: 1px; border: 2px solid #1a1a1a; border-radius: 4px; background: #a8a8a8; }
.field input, .count input { flex: 1; min-width: 0; width: 20px; text-align: center; }
.notch::before { content: ""; position: absolute; left: 25px; top: -1px; border: 3px solid transparent; border-top-color: #1a1a1a; }
.list-col { width: 258px; }
.list-col h3 { padding-right: 4px; }
.list-col .plate { padding: 3px 6px 3px 2px; }
.tools { display: flex; gap: 3px; height: 20px; margin-bottom: 3px; }
.tools button { width: 38px; border: 2px solid #1a1a1a; border-radius: 3px; background: #a8a8a8; }
.tools .loop { width: 35px; }
.select { width: 73px; margin: 0 0 0 auto; }
.select select { flex: 1; appearance: none; padding-left: 12px; outline: 0; }
.select svg { position: absolute; right: 2px; pointer-events: none; }
.count { width: 35px; margin: 0; background: #6b6b6b; }
.list-col ul { flex: 1; display: flex; flex-direction: column; gap: 3px; padding: 3px; border-radius: 4px 4px 0 0; background: #1a1a1a; }
.list-col li { display: flex; align-items: center; height: 20px; border-radius: 2px; background: #999; }
.list-col li.selected { box-shadow: inset 0 0 0 2px #e3e33a; }
.list-col li b { width: 12px; height: 12px; margin: 0 5px 0 2px; border-radius: 6px; background: #262626; color: #eee; font-size: 9px; line-height: 12px; text-align: center; }
.list-col li span { flex: 1; white-space: nowrap; }
.list-col li small { width: 40px; border-left: 1px solid #1a1a1a; color: #555; font-size: 10px; line-height: 20px; text-align: center; }
.list-foot { display: flex; align-items: center; justify-content: space-between; height: 21px; padding: 0 4px; background: #000; }
.trigger { width: 18px; }
.trigger h3 { display: flex; align-items: center; justify-content: center; }
.trigger .plate { align-items: center; justify-content: center; border-radius: 0 4px 4px 0; background: linear-gradient(90deg, #3a3a3a, #555 12px); }
.trigger span { writing-mode: vertical-rl; line-height: 16px; }
.chain { align-self: center; margin: 0 5px; }
.silence-col { width: 80px; }
.silence-col .plate { align-items: center; justify-content: center; border-radius: 4px; }
.silence-col .amount { margin-bottom: 0; }

.explorer { position: absolute; top: 552px; right: 0; width: 783px; border-radius: 8px 8px 0 0; background: #fff; color: #1a1a1a; font: 400 12px/16px "Open Sans", "Noto Sans", sans-serif; overflow: hidden; }
.ex-top { height: 84px; background: #f3f3f3; border-bottom: 1px solid #dadada; }
.ex-title { display: flex; align-items: center; gap: 4px; height: 29px; padding-left: 8px; }
.ex-title .caption { color: #000; }
.ex-title .caption button { width: 45px; }
.ex-tools { display: flex; align-items: center; height: 56px; color: #333; }
.ex-tools hr { width: 1px; height: 32px; margin: 0; border: 0; background: #dadada; }
.ex-tools .ico { width: 48px; height: 32px; }
.ex-tools hr + .ico { margin-left: 2px; }
.ex-tools .dim { opacity: .45; }
.new, .sort, .see { gap: 8px; height: 32px; justify-content: flex-start; }
.new svg:last-child, .sort svg:last-child, .see svg:last-child { color: #999; }
.new { width: 110px; padding-left: 20px; }
.sort { width: 128px; padding-left: 18px; }
.see { width: 71px; }
.ex-nav { display: flex; align-items: center; height: 55px; padding: 0 11px 0 3px; }
.ex-nav > button { width: 35px; height: 32px; }
.ex-nav > .thin { width: 26px; }
.ex-nav > .up { width: 33px; }
.path { flex: 1; display: flex; align-items: center; height: 34px; margin-left: 5px; padding: 0 11px 2px 8px; border: 1px solid #d9d9d9; }
.path a { color: inherit; text-decoration: none; }
.path .back { margin: 0 6px 0 5px; }
.path .sep { margin: 0 8px; }
.path .drop { margin: 0 21px 0 auto; color: #555; }
.find { display: flex; align-items: center; gap: 13px; width: 202px; height: 34px; margin-left: 12px; padding: 0 0 2px 14px; border: 1px solid #d9d9d9; }
.find input { flex: 1; min-width: 0; outline: 0; }
.find input::placeholder { color: #707070; opacity: 1; }
.ex-body { display: flex; height: 310px; }
.ex-files { flex: 1; padding-left: 14px; overflow: hidden; }
table { width: 100%; margin-top: -4px; table-layout: fixed; border-collapse: separate; border-spacing: 0 4px; }
tr { height: 27px; }
th { position: relative; padding: 0 0 2px 6px; border-left: 1px solid #e0e0e0; color: #4c607a; font-weight: 400; text-align: left; white-space: nowrap; }
th:first-child { padding-left: 15px; border-left-color: transparent; }
.asc { position: absolute; top: 0; left: 201px; }
.w40 { width: 40px; }
.w160 { width: 160px; }
.w120 { width: 120px; }
.w32 { width: 32px; }
td { padding: 0; border: 0 solid #99d1ff; color: #000; }
td div { display: flex; align-items: center; gap: 4px; padding-left: 4px; white-space: nowrap; }
.sel td { background: #cce8ff; }
.sel td:first-child { border-radius: 2px 0 0 2px; }
.focus td { border-width: 1px 0; }
.focus td:first-child { border-left-width: 1px; }
.focus td div { padding-left: 3px; }
.vscroll { width: 16px; padding: 17px 0 0 7px; background: #efefef; border-left: 1px solid #fff; }
.vscroll i { display: block; width: 2px; height: 168px; background: #858585; }
.hscroll { height: 16px; margin-right: 16px; padding: 7px 113px 0 17px; background: #efefef; }
.hscroll i { display: block; height: 2px; background: #858585; }
.status { display: flex; align-items: center; height: 24px; padding: 0 3px 0 14px; color: #33475e; }
.status span { padding-right: 7px; margin-right: 8px; border-right: 1px solid #e8e8e8; }
.status span + span { margin-right: auto; }
.status button { width: 22px; height: 22px; align-self: flex-start; }
.status .lit { border: 1px solid #26a0da; background: #cce8f7; }
</style>
